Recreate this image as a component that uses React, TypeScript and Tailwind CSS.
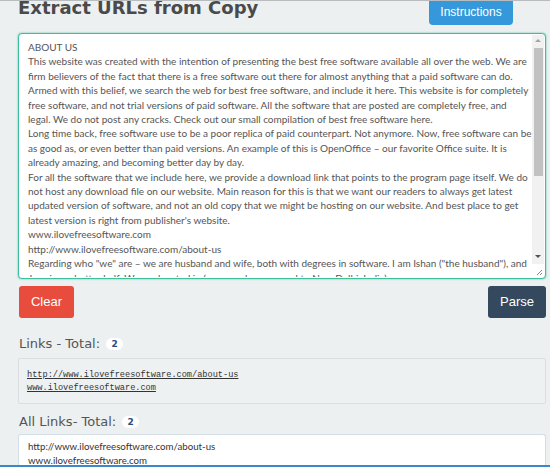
import React from 'react';

const aboutLines = [
  'ABOUT US',
  'This website was created with the intention of presenting the best free software available all over the web. We are',
  'firm believers of the fact that there is a free software out there for almost anything that a paid software can do.',
  'Armed with this belief, we search the web for best free software, and include it here. This website is for completely',
  'free software, and not trial versions of paid software. All the software that are posted are completely free, and',
  'legal. We do not post any cracks. Check out our small compilation of best free software here.',
  'Long time back, free software use to be a poor replica of paid counterpart. Not anymore. Now, free software can be',
  'as good as, or even better than paid versions. An example of this is OpenOffice \u2013 our favorite Office suite. It is',
  'already amazing, and becoming better day by day.',
  'For all the software that we include here, we provide a download link that points to the program page itself. We do',
  'not host any download file on our website. Main reason for this is that we want our readers to always get latest',
  'updated version of software, and not an old copy that we might be hosting on our website. And best place to get',
  "latest version is right from publisher's website.",
  'www.ilovefreesoftware.com',
  'http://www.ilovefreesoftware.com/about-us',
  'Regarding who "we" are \u2013 we are husband and wife, both with degrees in software. I am Ishan ("the husband"), and',
  'Java is my better half. We are located in (now, we have moved to New Delhi, India).',
];

const links = ['http://www.ilovefreesoftware.com/about-us', 'www.ilovefreesoftware.com'];

function Badge({ n }: { n: number }) {
  return (
    <span className="ml-[6px] inline-flex h-[12px] min-w-[17px] items-center justify-center rounded-full bg-white px-[5px] font-['DejaVu_Sans',sans-serif] text-[9px] font-bold leading-none text-[#2c4a7c]">
      {n}
    </span>
  );
}

function Scrollbar() {
  return (
    <div className="flex w-[12px] shrink-0 flex-col items-center bg-[#f1f1f1]">
      <div className="mt-[4px] h-0 w-0 border-x-[3px] border-b-[3px] border-x-transparent border-b-[#a3a3a3]" />
      <div className="mt-[6px] h-[128px] w-[9px] bg-[#c1c1c1]" />
      <div className="flex-1" />
      <div className="mb-[6px] h-0 w-0 border-x-[3px] border-t-[3px] border-x-transparent border-t-[#505050]" />
      <div className="flex h-[13px] w-[12px] items-end justify-end bg-white pb-[1px] pr-[1px]">
        <svg width="8" height="8" viewBox="0 0 8 8">
          <path d="M7 2 L2 7 M7 5 L5 7" stroke="#888" strokeWidth="1" />
        </svg>
      </div>
    </div>
  );
}

export default function App() {
  return (
    <div className="flex h-[467px] w-[550px] flex-col overflow-hidden border-t border-[#b9bcbe] bg-[#ecf0f1]">
      <div className="flex min-h-0 flex-1 flex-col overflow-hidden pl-[18px] pr-[4px]">
        {/* Header */}
        <div className="flex h-[25px] shrink-0 items-start justify-between pr-[33px]">
          <h1 className="-mt-[4px] font-['DejaVu_Sans',sans-serif] text-[18px] font-bold leading-[21px] text-[#4a4a4a]">
            Extract URLs from Copy
          </h1>
          <button className="-mt-[3px] h-[27px] w-[84px] rounded-[4px] bg-[#3498db] font-['Liberation_Sans',sans-serif] text-[12px] text-white">
            Instructions
          </button>
        </div>

        {/* Text input */}
        <div className="mt-[7px] flex h-[246px] shrink-0 overflow-hidden rounded-[4px] border border-[#3dbf9f] bg-white pr-[1px] pt-[1px] pb-[1px] shadow-[0_0_2px_#3dbf9f]">
          <div className="min-w-0 flex-1 overflow-hidden pl-[9px] pt-[5px] font-['Lato',sans-serif] text-[10px] leading-[14.4px] text-[#555]">
            {aboutLines.map((l, i) => (
              <div key={i} className="whitespace-nowrap">
                {l}
              </div>
            ))}
          </div>
          <Scrollbar />
        </div>

        {/* Buttons */}
        <div className="mt-[7px] flex shrink-0 items-center justify-between pl-[1px]">
          <button className="h-[32px] w-[55px] rounded-[3px] bg-[#e74c3c] font-['Liberation_Sans',sans-serif] text-[13px] text-white">
            Clear
          </button>
          <button className="h-[32px] w-[58px] rounded-[3px] bg-[#34495e] font-['Liberation_Sans',sans-serif] text-[13px] text-white">
            Parse
          </button>
        </div>

        {/* Links */}
        <div className="mt-[18px] flex shrink-0 items-center pl-[1px] font-['DejaVu_Sans',sans-serif] text-[13px] leading-[16px] text-[#555]">
          Links - Total:
          <Badge n={2} />
        </div>
        <div className="mt-[6px] shrink-0 rounded-[2px] border border-[#dcdfe0] bg-[#eef1f2] pb-[8px] pl-[8px] pt-[10px] font-['Liberation_Mono',monospace] text-[8.6px] leading-[13px] text-[#333]">
          {links.map((l) => (
            <div key={l} className="underline">
              {l}
            </div>
          ))}
        </div>

        {/* All links */}
        <div className="mt-[10px] flex shrink-0 items-center pl-[1px] font-['DejaVu_Sans',sans-serif] text-[13px] leading-[16px] text-[#555]">
          All Links- Total:
          <Badge n={2} />
        </div>
        <div className="mt-[4px] flex-1 rounded-t-[3px] border border-b-0 border-[#d3dde5] bg-white pl-[9px] pt-[4px] font-['Lato',sans-serif] text-[9.7px] leading-[14px] text-[#333]">
          {links.map((l) => (
            <div key={l}>{l}</div>
          ))}
        </div>
      </div>
      <div className="h-[2px] shrink-0 bg-[#3a87c9]" />
    </div>
  );
}
